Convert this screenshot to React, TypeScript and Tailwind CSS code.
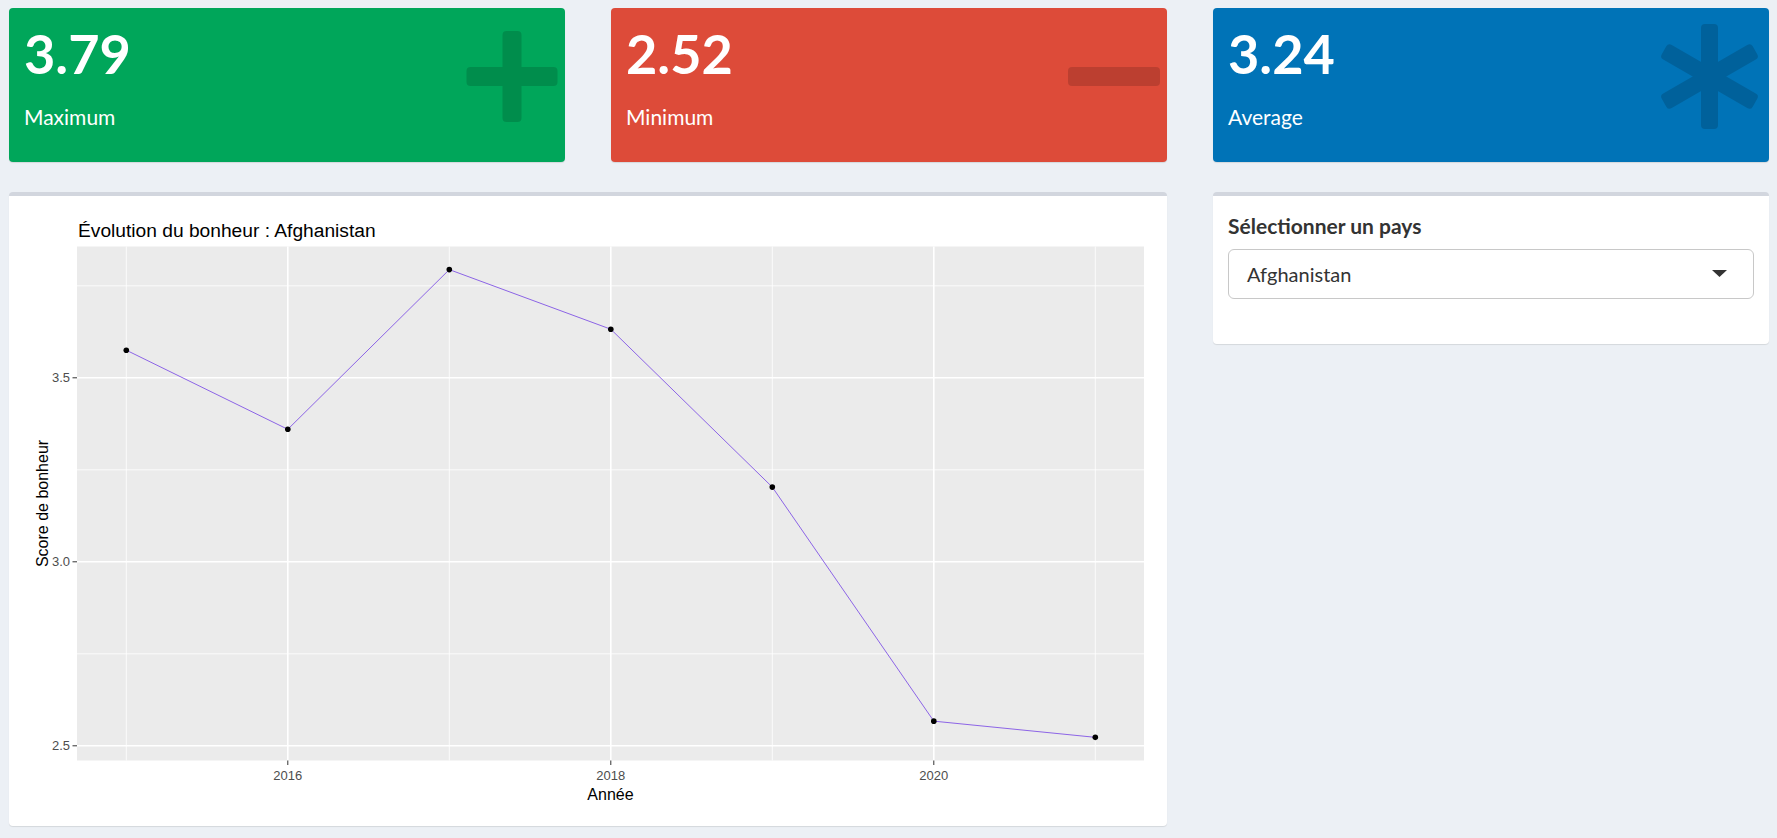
import { FC } from "react";

const years = [2015, 2016, 2017, 2018, 2019, 2020, 2021];
const scores = [3.575, 3.36, 3.794, 3.632, 3.203, 2.567, 2.523];

const px = (yr: number) => 102.3 + (yr - 2015) * 161.5;
const py = (v: number) => 166.8 - (v - 3.5) * 368;

const ValueBox: FC<{ value: string; label: string; bg: string; icon: React.ReactNode }> = ({ value, label, bg, icon }) => (
    <div className={`relative h-[154px] rounded-[4px] p-[15px] text-white shadow-[0_1px_1px_rgba(0,0,0,0.1)] ${bg}`}>
        <h3 className="m-0 mb-[15px] text-[54px] leading-[62.7px] font-bold">{value}</h3>
        <p className="m-0 text-[21px] leading-[32px]">{label}</p>
        <div className="absolute top-0 right-0">{icon}</div>
    </div>
);

const Chart: FC = () => {
    const pts = years.map((y, i) => `${px(y)},${py(scores[i])}`).join(" ");
    return (
        <svg width="1127" height="600" viewBox="0 0 1127 600" className="block" fontFamily="'Liberation Sans', Arial, sans-serif">
            <text x="54" y="25.5" fontSize="19.2" fill="#000">Évolution du bonheur : Afghanistan</text>
            <rect x="53" y="35.5" width="1067" height="514" fill="#ebebeb" />
            {[3.75, 3.25, 2.75].map((v) => (
                <line key={v} x1="53" x2="1120" y1={py(v)} y2={py(v)} stroke="#fff" strokeWidth="0.8" />
            ))}
            {[2015, 2017, 2019, 2021].map((y) => (
                <line key={y} x1={px(y)} x2={px(y)} y1="35.5" y2="549.5" stroke="#fff" strokeWidth="0.8" />
            ))}
            {[3.5, 3.0, 2.5].map((v) => (
                <line key={v} x1="53" x2="1120" y1={py(v)} y2={py(v)} stroke="#fff" strokeWidth="1.6" />
            ))}
            {[2016, 2018, 2020].map((y) => (
                <line key={y} x1={px(y)} x2={px(y)} y1="35.5" y2="549.5" stroke="#fff" strokeWidth="1.6" />
            ))}
            <polyline points={pts} fill="none" stroke="#8c64e6" strokeWidth="1" />
            {years.map((y, i) => (
                <circle key={y} cx={px(y)} cy={py(scores[i])} r="2.8" fill="#000" />
            ))}
            {[
                [3.5, "3.5"],
                [3.0, "3.0"],
                [2.5, "2.5"],
            ].map(([v, t]) => (
                <g key={t as string}>
                    <line x1="48.5" x2="53" y1={py(v as number)} y2={py(v as number)} stroke="#333" strokeWidth="1" />
                    <text x="46" y={py(v as number) + 4.6} fontSize="13" fill="#4d4d4d" textAnchor="end">{t}</text>
                </g>
            ))}
            {[2016, 2018, 2020].map((y) => (
                <g key={y}>
                    <line x1={px(y)} x2={px(y)} y1="549.5" y2="554" stroke="#333" strokeWidth="1" />
                    <text x={px(y)} y="568.5" fontSize="13" fill="#4d4d4d" textAnchor="middle">{y}</text>
                </g>
            ))}
            <text x="586.5" y="588.5" fontSize="16" fill="#000" textAnchor="middle">Année</text>
            <text x="0" y="0" fontSize="16" fill="#000" textAnchor="middle" transform="translate(23.8 292.5) rotate(-90)">Score de bonheur</text>
        </svg>
    );
};

const App: FC = () => (
    <div className="min-h-[838px] w-full bg-[#ecf0f5] pl-[9px] pr-[8px] pt-[8px] font-['Lato',sans-serif] text-[#333]">
        <div className="grid grid-cols-3 gap-x-[46px]">
            <ValueBox
                value="3.79"
                label="Maximum"
                bg="bg-[#00a65a]"
                icon={
                    <svg width="120" height="140" viewBox="0 0 120 140">
                        <path
                            d="M61.5 23h11a4 4 0 0 1 4 4v32h32a4 4 0 0 1 4 4v11a4 4 0 0 1-4 4h-32v32a4 4 0 0 1-4 4h-11a4 4 0 0 1-4-4v-32h-32a4 4 0 0 1-4-4v-11a4 4 0 0 1 4-4h32v-32a4 4 0 0 1 4-4z"
                            fill="#000"
                            opacity="0.15"
                        />
                    </svg>
                }
            />
            <ValueBox
                value="2.52"
                label="Minimum"
                bg="bg-[#dd4b39]"
                icon={
                    <svg width="120" height="140" viewBox="0 0 120 140">
                        <rect x="21" y="59" width="92" height="19" rx="4" fill="#000" opacity="0.15" />
                    </svg>
                }
            />
            <ValueBox
                value="3.24"
                label="Average"
                bg="bg-[#0073b7]"
                icon={
                    <svg width="120" height="140" viewBox="0 0 120 140">
                        <g fill="#000" opacity="0.15">
                            <rect x="52" y="16" width="17" height="105" rx="4" />
                            <rect x="52" y="16" width="17" height="105" rx="4" transform="rotate(60 60.5 68.5)" />
                            <rect x="52" y="16" width="17" height="105" rx="4" transform="rotate(-60 60.5 68.5)" />
                        </g>
                    </svg>
                }
            />
        </div>
        <div className="mt-[30px] grid grid-cols-3 gap-x-[46px] items-start">
            <div className="col-span-2 rounded-[4px] border-t-[4.5px] border-[#d2d6de] bg-white p-[15px] shadow-[0_1px_1px_rgba(0,0,0,0.1)]">
                <Chart />
            </div>
            <div className="rounded-[4px] border-t-[4.5px] border-[#d2d6de] bg-white px-[15px] pt-[15px] pb-[45px] shadow-[0_1px_1px_rgba(0,0,0,0.1)]">
                <label className="block mb-[7.5px] text-[21px] leading-[30px] font-bold text-[#333]">Sélectionner un pays</label>
                <div className="flex h-[50px] items-center justify-between rounded-[6px] border-[1.5px] border-[#c8c8c8] pl-[18px] pr-[26px]">
                    <span className="text-[20px] text-[#333]">Afghanistan</span>
                    <svg width="15" height="7" viewBox="0 0 15 7">
                        <polygon points="0,0 15,0 7.5,7" fill="#333" />
                    </svg>
                </div>
            </div>
        </div>
    </div>
);

export default App;
